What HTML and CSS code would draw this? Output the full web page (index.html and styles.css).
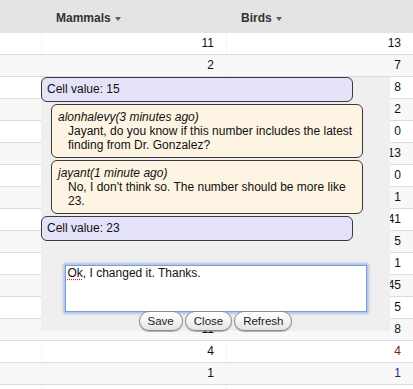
FILE: index.html
```html
<!DOCTYPE html>
<html lang="en">
<head>
    <meta charset="UTF-8">
    <title>Cell comments</title>
    <link rel="stylesheet" href="styles.css">
</head>
<body>
<div class="grid">
    <div class="grid-head">
        <div class="cell"></div>
        <div class="cell head">Mammals<span class="sort"></span></div>
        <div class="cell head">Birds<span class="sort"></span></div>
    </div>
    <div class="grid-row"><div class="cell"></div><div class="cell num">11</div><div class="cell num">13</div></div>
    <div class="grid-row"><div class="cell"></div><div class="cell num">2</div><div class="cell num">7</div></div>
    <div class="grid-row"><div class="cell"></div><div class="cell num"></div><div class="cell num">8</div></div>
    <div class="grid-row"><div class="cell"></div><div class="cell num"></div><div class="cell num">2</div></div>
    <div class="grid-row"><div class="cell"></div><div class="cell num"></div><div class="cell num">0</div></div>
    <div class="grid-row"><div class="cell"></div><div class="cell num"></div><div class="cell num">13</div></div>
    <div class="grid-row"><div class="cell"></div><div class="cell num"></div><div class="cell num">0</div></div>
    <div class="grid-row"><div class="cell"></div><div class="cell num"></div><div class="cell num">1</div></div>
    <div class="grid-row"><div class="cell"></div><div class="cell num"></div><div class="cell num">41</div></div>
    <div class="grid-row"><div class="cell"></div><div class="cell num"></div><div class="cell num">5</div></div>
    <div class="grid-row"><div class="cell"></div><div class="cell num"></div><div class="cell num">1</div></div>
    <div class="grid-row"><div class="cell"></div><div class="cell num"></div><div class="cell num">45</div></div>
    <div class="grid-row"><div class="cell"></div><div class="cell num"></div><div class="cell num">5</div></div>
    <div class="grid-row"><div class="cell"></div><div class="cell num">11</div><div class="cell num">8</div></div>
    <div class="grid-row"><div class="cell"></div><div class="cell num">4</div><div class="cell num warm">4</div></div>
    <div class="grid-row"><div class="cell"></div><div class="cell num">1</div><div class="cell num cool">1</div></div>
    <div class="grid-row"><div class="cell"></div><div class="cell num"></div><div class="cell num"></div></div>
</div>

<!-- comment thread popup over the grid -->
<div class="comment-panel">
    <div class="cell-value">Cell value: 15</div>
    <div class="comment">
        <div class="comment-author">alonhalevy(3 minutes ago)</div>
        <div class="comment-body">Jayant, do you know if this number includes the latest finding from Dr. Gonzalez?</div>
    </div>
    <div class="comment">
        <div class="comment-author">jayant(1 minute ago)</div>
        <div class="comment-body">No, I don't think so. The number should be more like 23.</div>
    </div>
    <div class="cell-value">Cell value: 23</div>
    <div class="reply-box"><span class="misspelled">Ok</span>, I changed it. Thanks.</div>
    <div class="panel-actions">
        <button type="button">Save</button>
        <button type="button">Close</button>
        <button type="button">Refresh</button>
    </div>
</div>
</body>
</html>
```

FILE: styles.css
```css
:root {
    --head-bg: #e4e4e4;
    --row-alt: #f8f8f8;
    --line-color: #dcdcdc;
    --panel-bg: #efefef;
    --cell-value-bg: #e5e3f9;
    --comment-bg: #fdf4e4;
    --box-border: #3a3a3a;
}

* {
    box-sizing: border-box;
    margin: 0;
    padding: 0;
}

html, body {
    overflow: hidden;
}

body {
    font-family: 'Liberation Sans', Arial, sans-serif;
    font-size: 12px;
    color: #111;
    background-color: #fff;
    width: 413px;
    height: 389px;
    position: relative;
}

.grid-head,
.grid-row {
    display: grid;
    grid-template-columns: 41px 185px 187px;
}

.grid-head {
    height: 33px;
    background-color: var(--head-bg);
}

.grid-row {
    height: 22px;
    border-bottom: 1px solid var(--line-color);
}

.grid-row:nth-child(odd) {
    background-color: var(--row-alt);
}

.grid-row .cell + .cell {
    border-left: 1px solid #f6f6f6;
}

.cell.head {
    display: flex;
    align-items: center;
    padding: 3px 0 0 15px;
    font-weight: bold;
    color: #333;
}

.sort {
    display: inline-block;
    width: 0;
    height: 0;
    margin-left: 4px;
    margin-top: 1px;
    border-left: 3.5px solid transparent;
    border-right: 3.5px solid transparent;
    border-top: 4px solid #4f5d7a;
}

.cell.num {
    text-align: right;
    padding-right: 12px;
    line-height: 21px;
}

.warm {
    color: #6e2a0c;
}

.cool {
    color: #1b2a80;
}

.comment-panel {
    position: absolute;
    left: 41px;
    top: 77px;
    width: 349px;
    background-color: var(--panel-bg);
    display: flex;
    flex-direction: column;
    align-items: flex-start;
    gap: 2px;
}

.cell-value {
    width: 312px;
    padding: 4px 5px 5px;
    line-height: 14px;
    background-color: var(--cell-value-bg);
    border: 1px solid var(--box-border);
    border-radius: 6px;
}

.comment {
    width: 312px;
    margin-left: 10px;
    padding: 5px 6px 5px 6px;
    line-height: 14px;
    background-color: var(--comment-bg);
    border: 1px solid var(--box-border);
    border-radius: 6px;
}

.comment-author {
    font-style: italic;
}

.comment-body {
    margin-left: 10px;
}

.reply-box {
    align-self: center;
    width: 302px;
    height: 47px;
    margin-top: 22px;
    padding: 0 2px;
    line-height: 14px;
    background-color: #fff;
    border: 1px solid #7a9ed6;
    box-shadow: 0 0 0 1px #b3c9ec, 0 0 3px 1px #7fa3da;
}

.misspelled {
    text-decoration: underline dotted #e02020;
    text-underline-offset: 2px;
}

.panel-actions {
    align-self: center;
    display: flex;
    gap: 2px;
    margin-top: -3px;
}

button {
    font-family: 'Liberation Sans', Arial, sans-serif;
    font-size: 11.5px;
    color: #1a1a1a;
    height: 20px;
    padding: 0 8px;
    border: 1px solid #8a8a8a;
    border-radius: 10px;
    background: linear-gradient(#ffffff 0%, #f6f6f6 45%, #e4e4e4 100%);
    box-shadow: 0 1px 1px rgba(0, 0, 0, 0.3);
    cursor: pointer;
}
```
